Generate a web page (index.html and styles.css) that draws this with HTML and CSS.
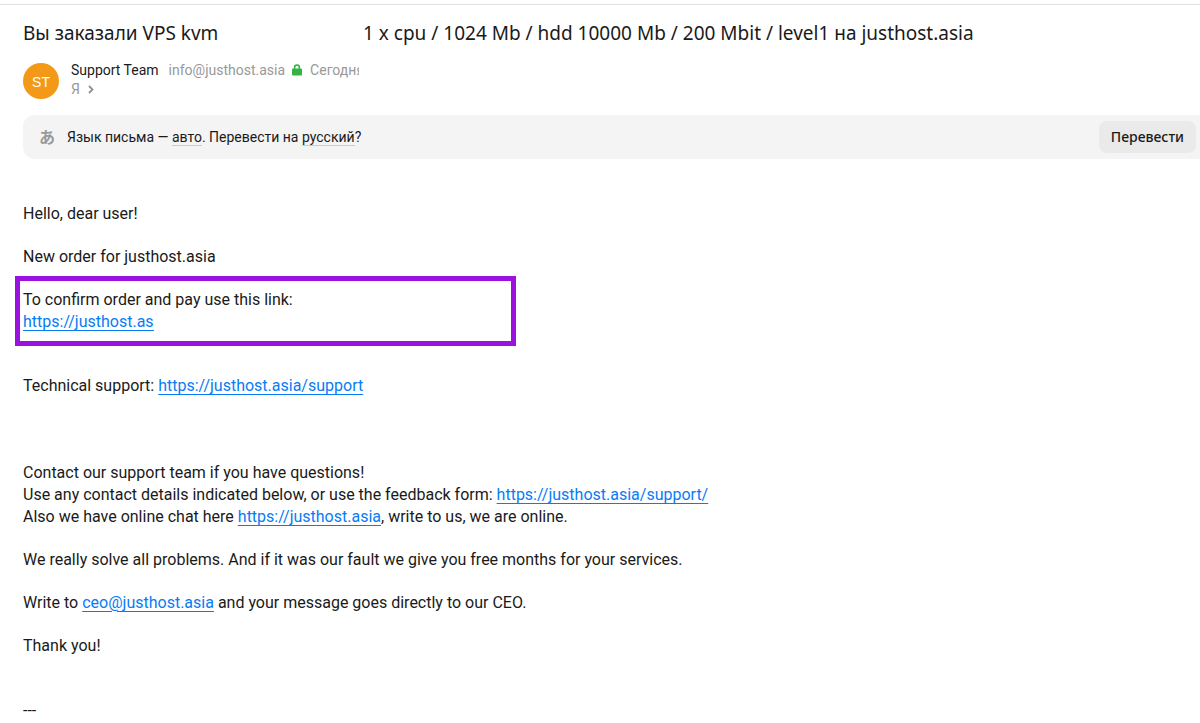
FILE: index.html
```html
<!DOCTYPE html>
<html lang="ru">
<head>
<meta charset="utf-8">
<title>Вы заказали VPS kvm</title>
<link rel="stylesheet" href="styles.css">
</head>
<body>
<main class="mail">
  <h1 class="subject"><span class="subject-plan">Вы заказали VPS kvm</span><span>1 x cpu / 1024 Mb / hdd 10000 Mb / 200 Mbit / level1 на justhost.asia</span></h1>
  <header class="sender">
    <span class="avatar">ST</span>
    <div class="details">
      <div class="from">
        <span class="name">Support Team</span>
        <span class="address">info@justhost.asia</span>
        <svg class="lock" viewBox="0 0 10 12" aria-hidden="true"><path d="M2.6 6V3.4a2.4 2.4 0 0 1 4.8 0V6" fill="none" stroke="#32b343" stroke-width="1.6"/><rect y="4.6" width="10" height="7" rx="1" fill="#32b343"/></svg>
        <span class="date">Сегодня</span>
      </div>
      <div class="to">
        <span>Я</span>
        <svg class="chevron" viewBox="0 0 6 9" aria-hidden="true"><path d="M1 1l3.5 3.5L1 8" fill="none" stroke="#929292" stroke-width="1.8"/></svg>
      </div>
    </div>
  </header>
  <section class="translate">
    <span class="glyph" aria-hidden="true">あ</span>
    <p class="question">Язык письма — <span class="lang">авто</span>. Перевести на <span class="lang">русский</span>?</p>
    <button class="translate-button" type="button">Перевести</button>
  </section>
  <article class="body" lang="en">
    <p>Hello, dear user!</p>
    <p>New order for justhost.asia</p>
    <div class="highlight">
      <div>To confirm order and pay use this link:</div>
      <a class="cut" href="https://justhost.asia">https://justhost.asia</a>
    </div>
    <p class="support">Technical support: <a href="https://justhost.asia/support">https://justhost.asia/support</a></p>
    <p>Contact our support team if you have questions!<br>
    Use any contact details indicated below, or use the feedback form: <a href="https://justhost.asia/support/">https://justhost.asia/support/</a><br>
    Also we have online chat here <a href="https://justhost.asia">https://justhost.asia</a>, write to us, we are online.</p>
    <p>We really solve all problems. And if it was our fault we give you free months for your services.</p>
    <p>Write to <a href="mailto:ceo@justhost.asia">ceo@justhost.asia</a> and your message goes directly to our CEO.</p>
    <p class="thanks">Thank you!</p>
    <p>---</p>
  </article>
</main>
</body>
</html>
```
FILE: styles.css
```css
body {
  margin: 4px 0 0;
  border-top: 1px solid #e0e0e0;
  background: #fff;
  color: #1a1a1a;
  font-family: Roboto, "Noto Sans", sans-serif;
  font-size: 16px;
  line-height: 22px;
}
.mail { padding: 14px 0 0 23px; }
.subject {
  display: flex;
  margin: 0;
  font-family: "Noto Sans", sans-serif;
  font-size: 19px;
  font-weight: 400;
  line-height: 28px;
  white-space: nowrap;
}
.subject-plan { width: 340px; }
.sender {
  display: flex;
  align-items: flex-end;
  gap: 12px;
  margin-top: 14px;
  font-size: 14px;
  line-height: 19px;
}
.avatar {
  width: 36px;
  height: 36px;
  border-radius: 50%;
  background: #f39817;
  color: #fff;
  font: 14px/38px "Liberation Sans", sans-serif;
  text-align: center;
}
.from, .to { display: flex; align-items: center; }
.address, .date, .to { color: #999; }
.address { margin-left: 10px; }
.lock { width: 10px; height: 12px; margin: 0 8px 2px 7px; }
.date { width: 49px; overflow: hidden; }
.chevron { width: 6px; height: 9px; margin-left: 8px; }
.translate {
  display: flex;
  align-items: center;
  margin-top: 16px;
  padding: 6px 4px 6px 16px;
  border-radius: 12px 0 0 12px;
  background: #f4f4f4;
  font-size: 14px;
}
.glyph {
  width: 28px;
  padding-bottom: 2px;
  color: #999;
  font: 700 16px/22px "Noto Sans CJK JP", sans-serif;
}
.question { flex: 1; margin: 0; }
.lang { border-bottom: 1px solid #ccc; line-height: 16px; display: inline-block; }
.translate-button {
  height: 32px;
  padding: 0 12px;
  border: 0;
  border-radius: 8px;
  background: #eaeaea;
  color: #1a1a1a;
  font: 500 14px/20px "Noto Sans", sans-serif;
}
.body { padding-top: 44px; }
.body p { margin: 0 0 21px; }
.body a { color: #077cf5; text-underline-offset: 3px; }
.body .highlight {
  max-width: 488px;
  margin: -13px 0 29px -8px;
  padding: 8px 0 8px 3px;
  border: 5px solid #9b12e0;
}
.highlight .cut {
  display: block;
  width: 131px;
  overflow: hidden;
  white-space: nowrap;
}
.body .support { margin-bottom: 65px; }
.body .thanks { margin-bottom: 43px; }
.body p:last-child { margin-bottom: 0; }
```
